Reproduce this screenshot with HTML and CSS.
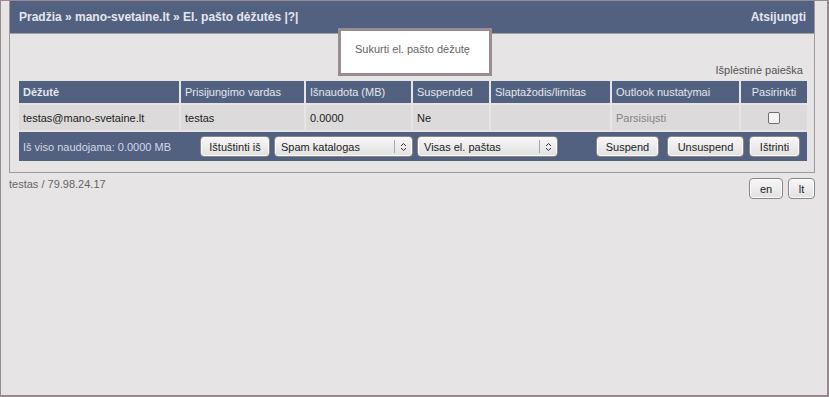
FILE: index.html
```html
<!DOCTYPE html>
<html lang="lt">
<head>
<meta charset="utf-8">
<title>El. pašto dėžutės</title>
<link rel="stylesheet" href="styles.css">
</head>
<body>
<div class="frame">
  <div class="box">
    <div class="topbar">
      <div class="crumbs">Pradžia » mano-svetaine.lt » El. pašto dėžutės |?|</div>
      <div class="logout">Atsijungti</div>
    </div>
    <div class="popup">Sukurti el. pašto dėžutę</div>
    <div class="search">Išplėstinė paieška</div>
    <table class="grid">
      <thead>
        <tr class="head">
          <th class="c1 strong">Dėžutė</th>
          <th class="c2">Prisijungimo vardas</th>
          <th class="c3">Išnaudota (MB)</th>
          <th class="c4">Suspended</th>
          <th class="c5">Slaptažodis/limitas</th>
          <th class="c6">Outlook nustatymai</th>
          <th class="c7 center">Pasirinkti</th>
        </tr>
      </thead>
      <tbody>
        <tr class="row">
          <td>testas@mano-svetaine.lt</td>
          <td>testas</td>
          <td>0.0000</td>
          <td>Ne</td>
          <td></td>
          <td class="muted">Parsisiųsti</td>
          <td class="center"><span class="check"></span></td>
        </tr>
        <tr class="foot">
          <td colspan="7">
            <div class="footbar">
              <span class="total">Iš viso naudojama: 0.0000 MB</span>
              <span class="btn w-empty">Ištuštinti iš</span>
              <span class="select w-spam"><span class="sel-text">Spam katalogas</span><span class="sel-arrow"><svg width="7" height="10" viewBox="0 0 7 10"><path d="M1 4 L3.5 1.5 L6 4 M1 6 L3.5 8.5 L6 6" fill="none" stroke="#333" stroke-width="1"/></svg></span></span>
              <span class="select w-all"><span class="sel-text">Visas el. paštas</span><span class="sel-arrow"><svg width="7" height="10" viewBox="0 0 7 10"><path d="M1 4 L3.5 1.5 L6 4 M1 6 L3.5 8.5 L6 6" fill="none" stroke="#333" stroke-width="1"/></svg></span></span>
              <span class="right">
                <span class="btn w-susp">Suspend</span>
                <span class="btn w-unsusp">Unsuspend</span>
                <span class="btn w-del">Ištrinti</span>
              </span>
            </div>
          </td>
        </tr>
      </tbody>
    </table>
  </div>
  <div class="below">
    <span class="who">testas / 79.98.24.17</span>
    <span class="langs">
      <span class="btn lang-en">en</span>
      <span class="btn lang-lt">lt</span>
    </span>
  </div>
</div>
</body>
</html>
```

FILE: styles.css
```css
* { box-sizing: border-box; }
html, body { margin: 0; padding: 0; }
body {
  width: 829px;
  height: 397px;
  overflow: hidden;
  background: #e6e4e5;
  font-family: "Liberation Sans", Arial, sans-serif;
  font-size: 11px;
  color: #222;
}
.frame {
  width: 829px;
  height: 397px;
  border-style: solid;
  border-color: #978a90;
  border-width: 1px 2px 2px 1px;
  padding-left: 8px;
  position: relative;
}
.box {
  width: 806px;
  border: 1px solid #a09b9e;
  border-top: 0;
  padding-bottom: 9px;
  position: relative;
}
.topbar {
  height: 33px;
  background: #536180;
  border-bottom: 1px solid #a29ea2;
  display: flex;
  justify-content: space-between;
  align-items: center;
  padding: 0 8px 0 9px;
  color: #e4e6ee;
  font-weight: bold;
  font-size: 12px;
}
.popup {
  position: absolute;
  left: 328px;
  top: 27px;
  width: 154px;
  height: 48px;
  background: #fff;
  border: 3px solid #9a8c92;
  padding: 11px 0 0 14px;
  line-height: 14px;
  color: #666;
  font-size: 11px;
}
.search {
  text-align: right;
  padding: 29px 11px 0 0;
  line-height: 14px;
  height: 43px;
  color: #555;
}
.grid {
  margin: 2px 7px 0 7px;
  width: 790px;
  border-collapse: separate;
  border-spacing: 2px;
  table-layout: fixed;
}
.grid th, .grid td {
  padding: 0 0 0 4px;
  text-align: left;
  white-space: nowrap;
  overflow: hidden;
}
.head th {
  height: 22px;
  background: #536180;
  color: #e2e6ef;
  font-weight: normal;
}
.head th.strong { font-weight: bold; }
.c1 { width: 160px; }
.c2 { width: 123px; }
.c3 { width: 105px; }
.c4 { width: 76px; }
.c5 { width: 119px; }
.c6 { width: 127px; }
.c7 { width: 66px; }
.grid .center { text-align: center; padding-left: 0; }
.row td {
  height: 25px;
  background: #dcdadb;
  color: #222;
}
.row td.muted { color: #858385; }
.check {
  display: inline-block;
  width: 12px;
  height: 12px;
  border: 1px solid #6f6d70;
  border-radius: 2px;
  background: #f4f4f4;
  vertical-align: middle;
}
.foot td {
  height: 29px;
  background: #536180;
  padding: 0 7px 0 4px;
}
.footbar {
  display: flex;
  align-items: center;
}
.total {
  width: 177px;
  color: #d2d8e6;
}
.btn {
  display: inline-flex;
  align-items: center;
  justify-content: center;
  height: 21px;
  border: 1px solid #8a8588;
  border-radius: 4px;
  background: linear-gradient(#f7f7f7, #e2e1e2);
  box-shadow: inset 0 0 0 1px #fbfbfb;
  color: #222;
  font-size: 11px;
}
.select {
  display: inline-flex;
  align-items: center;
  height: 21px;
  border: 1px solid #8a8588;
  border-radius: 4px;
  background: linear-gradient(#f7f7f7, #e2e1e2);
  box-shadow: inset 0 0 0 1px #fbfbfb;
  color: #222;
  margin-left: 4px;
}
.sel-text { flex: 1; padding-left: 6px; }
.sel-arrow {
  width: 18px;
  height: 13px;
  border-left: 1px solid #a9a5a8;
  display: flex;
  align-items: center;
  justify-content: center;
}
.w-empty { width: 70px; }
.w-spam { width: 139px; }
.w-all { width: 141px; }
.right { margin-left: auto; display: flex; }
.w-susp { width: 63px; }
.w-unsusp { width: 77px; margin-left: 8px; }
.w-del { width: 51px; margin-left: 5px; }
.below {
  width: 806px;
  display: flex;
  justify-content: space-between;
  align-items: flex-start;
  margin-top: 5px;
}
.who {
  color: #666;
  line-height: 14px;
  margin-top: -1px;
}
.langs { display: flex; }
.lang-en { width: 34px; height: 21px; }
.lang-lt { width: 27px; height: 21px; margin-left: 5px; }
```
